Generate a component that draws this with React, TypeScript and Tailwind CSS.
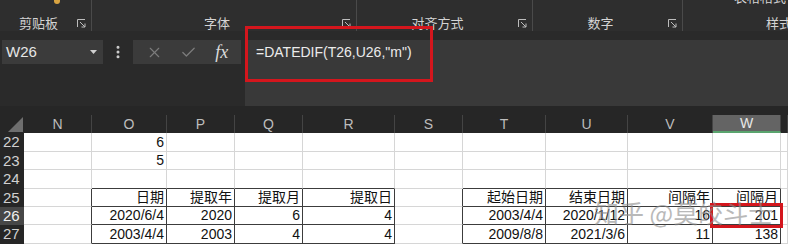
import { Check, EllipsisVertical, X } from 'lucide-react'

const cols = ['N', 'O', 'P', 'Q', 'R', 'S', 'T', 'U', 'V', 'W', 'X']

type Row = { n: number; cells: Record<string, string> }

const rows: Row[] = [
  { n: 22, cells: { O: '6' } },
  { n: 23, cells: { O: '5' } },
  { n: 24, cells: {} },
  {
    n: 25,
    cells: { O: '日期', P: '提取年', Q: '提取月', R: '提取日', T: '起始日期', U: '结束日期', V: '间隔年', W: '间隔月' },
  },
  {
    n: 26,
    cells: { O: '2020/6/4', P: '2020', Q: '6', R: '4', T: '2003/4/4', U: '2020/1/12', V: '16', W: '201' },
  },
  {
    n: 27,
    cells: { O: '2003/4/4', P: '2003', Q: '4', R: '4', T: '2009/8/8', U: '2021/3/6', V: '11', W: '138' },
  },
]

const tableCols = ['O', 'P', 'Q', 'R', 'T', 'U', 'V', 'W']

function inTable(n: number, c: string) {
  return n >= 25 && tableCols.includes(c)
}

function Launcher() {
  return (
    <svg width="9" height="9" viewBox="0 0 9 9" fill="none" stroke="#bdbdbd" strokeWidth="1">
      <path d="M0.5 8V0.5H8" />
      <path d="M3 3l5 5M8 4.5V8H4.5" />
    </svg>
  )
}

function RibbonGroup({ label, width }: { label: string; width: string }) {
  return (
    <div className={`${width} h-full flex items-end border-r border-[#4a4a4a]`}>
      <div className="flex-1 text-center text-[13px] leading-[17px] text-[#d4d4d4]">{label}</div>
      <div className="mr-[5px] mb-[3px]">
        <Launcher />
      </div>
    </div>
  )
}

export default function App() {
  return (
    <div
      className="relative w-[788px] h-[244px] overflow-hidden bg-[#262626] flex flex-col"
      style={{ fontFamily: '"Liberation Sans", "Noto Sans CJK SC", sans-serif' }}
    >
      {/* Ribbon */}
      <div className="h-[31px] shrink-0 bg-[#2e2e2e] flex" style={{ fontFamily: '"Noto Sans CJK SC", sans-serif' }}>
        <div className="w-[92px] h-full border-r border-[#4a4a4a] flex items-end relative">
          <div className="absolute left-[54px] top-0 w-[6px] h-[4px] rounded-b-full bg-[#d9a441]" />
          <div className="flex-1 text-center text-[13px] leading-[17px] text-[#d4d4d4]">剪贴板</div>
          <div className="mr-[5px] mb-[3px]">
            <Launcher />
          </div>
        </div>
        <RibbonGroup label="字体" width="w-[265px]" />
        <RibbonGroup label="对齐方式" width="w-[176px]" />
        <RibbonGroup label="数字" width="w-[150px]" />
        <div className="flex-1 h-full flex flex-col items-end pr-[2px]">
          <div className="text-[13px] leading-[13px] -mt-[10px] text-[#d4d4d4]">表格格式</div>
          <div className="mt-auto text-[13px] leading-[17px] text-[#d4d4d4] -mr-[6px]">样式</div>
        </div>
      </div>

      {/* Formula bar */}
      <div className="h-[75px] shrink-0 bg-[#2a2a2a] flex items-start pt-[9px]">
        <div className="ml-[2px] w-[101px] h-[24px] bg-[#3b3b3b] flex items-center pl-[4px] pr-[6px]">
          <span className="flex-1 text-[15px] text-[#e6e6e6]">W26</span>
          <svg width="7" height="4" viewBox="0 0 7 4">
            <path d="M0 0h7L3.5 4z" fill="#d0d0d0" />
          </svg>
        </div>
        <div className="w-[30px] h-[24px] flex items-center justify-center">
          <EllipsisVertical size={16} color="#cfcfcf" strokeWidth={2.5} />
        </div>
        <div className="w-[108px] h-[24px] bg-[#3b3b3b] flex items-center justify-around px-[4px]">
          <X size={17} color="#7c7c7c" strokeWidth={1.6} />
          <Check size={17} color="#7c7c7c" strokeWidth={1.8} />
          <span className="italic text-[18px] text-[#dcdcdc] leading-none" style={{ fontFamily: '"Liberation Serif", serif' }}>
            fx
          </span>
        </div>
        <div className="ml-[4px] flex-1 h-[66px] bg-[#393939] pl-[11px]">
          <div className="h-[24px] leading-[24px] text-[14px] text-[#ebebeb]">=DATEDIF(T26,U26,"m")</div>
        </div>
      </div>

      <div className="h-[9px] shrink-0" />

      {/* Sheet */}
      <div className="grid grid-cols-[24px_68px_75px_68px_68px_92px_68px_83px_82px_85px_68px_1fr] grid-rows-[18px_19px_18px_19px_18px_18px_19px]">
        <div className="relative bg-[#262626]">
          <svg className="absolute right-[1px] bottom-[1px]" width="15" height="15" viewBox="0 0 15 15">
            <path d="M15 0V15H0z" fill="#6e6e6e" />
          </svg>
        </div>
        {cols.map((c) => (
          <div
            key={c}
            className={`flex items-center justify-center text-[14px] border-r border-[#444444] ${
              c === 'W' ? 'bg-[#646464] text-[#e8e8e8] border-b-2 border-b-[#5aa46e]' : 'bg-[#262626] text-[#bdbdbd]'
            }`}
          >
            {c === 'X' ? '' : c}
          </div>
        ))}

        {rows.map((r) => (
          <>
            <div
              key={`h${r.n}`}
              className={`flex items-center pl-[3px] text-[15px] ${
                r.n === 26 ? 'bg-[#474747] text-[#f0f0f0]' : 'bg-[#262626] text-[#d0d0d0]'
              }`}
            >
              {r.n}
            </div>
            {cols.map((c, i) => {
              const t = inTable(r.n, c)
              const rightDark = t || inTable(r.n, cols[i + 1] ?? '')
              const bottomDark = t || (r.n === 24 && tableCols.includes(c))
              const v = r.cells[c]
              return (
                <div
                  key={`${r.n}${c}`}
                  className={`bg-white border-r border-b flex items-center justify-end pr-[2px] text-[14px] text-[#111111] whitespace-nowrap overflow-hidden ${
                    rightDark ? 'border-r-[#3c3c3c]' : 'border-r-[#d6d6d6]'
                  } ${bottomDark ? 'border-b-[#3c3c3c]' : 'border-b-[#d6d6d6]'}`}
                >
                  {v}
                </div>
              )
            })}
          </>
        ))}
      </div>

      {/* Red highlight boxes */}
      <div className="absolute left-[245px] top-[26px] w-[188px] h-[56px] border-[3px] border-[#d4161d]" />
      <div className="absolute left-[710px] top-[203px] w-[73px] h-[25px] border-[3px] border-[#d4161d]" />

      {/* Watermark */}
      <div
        className="absolute left-[594px] top-[197px] text-[25px] leading-[30px] text-[#8c8c8c] opacity-60 whitespace-nowrap"
        style={{ fontFamily: '"Noto Sans CJK SC", sans-serif' }}
      >
        知乎 @莫皎斗士
      </div>
    </div>
  )
}
